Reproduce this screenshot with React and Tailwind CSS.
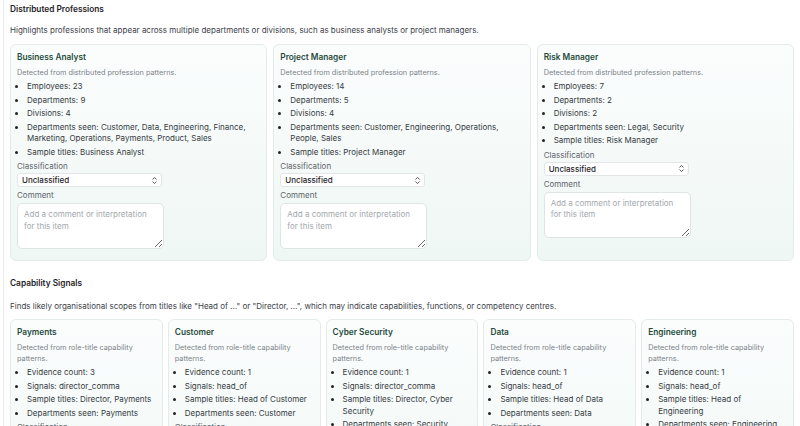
import React from "react";

const profs = [
  {
    title: "Business Analyst",
    items: [
      "Employees: 23",
      "Departments: 9",
      "Divisions: 4",
      "Departments seen: Customer, Data, Engineering, Finance, Marketing, Operations, Payments, Product, Sales",
      "Sample titles: Business Analyst",
    ],
  },
  {
    title: "Project Manager",
    items: [
      "Employees: 14",
      "Departments: 5",
      "Divisions: 4",
      "Departments seen: Customer, Engineering, Operations, People, Sales",
      "Sample titles: Project Manager",
    ],
  },
  {
    title: "Risk Manager",
    items: [
      "Employees: 7",
      "Departments: 2",
      "Divisions: 2",
      "Departments seen: Legal, Security",
      "Sample titles: Risk Manager",
    ],
  },
];

const caps = [
  {
    title: "Payments",
    items: [
      "Evidence count: 3",
      "Signals: director_comma",
      "Sample titles: Director, Payments",
      "Departments seen: Payments",
    ],
  },
  {
    title: "Customer",
    items: [
      "Evidence count: 1",
      "Signals: head_of",
      "Sample titles: Head of Customer",
      "Departments seen: Customer",
    ],
  },
  {
    title: "Cyber Security",
    items: [
      "Evidence count: 1",
      "Signals: director_comma",
      "Sample titles: Director, Cyber Security",
      "Departments seen: Security",
    ],
  },
  {
    title: "Data",
    items: [
      "Evidence count: 1",
      "Signals: head_of",
      "Sample titles: Head of Data",
      "Departments seen: Data",
    ],
  },
  {
    title: "Engineering",
    items: [
      "Evidence count: 1",
      "Signals: head_of",
      "Sample titles: Head of Engineering",
      "Departments seen: Engineering",
    ],
  },
];

function Chevrons() {
  return (
    <svg width="7" height="9" viewBox="0 0 7 9" fill="none" stroke="#555" strokeWidth="1" strokeLinecap="round" strokeLinejoin="round">
      <path d="M1.7 3.2 L3.5 1.4 L5.3 3.2" />
      <path d="M1.7 5.8 L3.5 7.6 L5.3 5.8" />
    </svg>
  );
}

function Card({ title, subtitle, items }) {
  return (
    <div className="rounded-[6px] border border-[#e4ecea] bg-gradient-to-b from-[#fbfdfd] to-[#eff7f4] px-[6px] pt-[6px] pb-[11px]">
      <div className="text-[8.3px] leading-[12px] font-semibold text-[#1f4b3b]">{title}</div>
      <div className="mt-[4px] text-[7.3px] leading-[11px] text-[#7b8389]">{subtitle}</div>
      <ul className="mt-[3px] list-disc pl-[10px] text-[8px] leading-[11.5px] text-[#353b42] marker:text-[#222]">
        {items.map((it, i) => (
          <li key={i} className="mb-[2px]">
            {it}
          </li>
        ))}
      </ul>
      <div className="mt-[2px] text-[8px] leading-[12px] text-[#5d646b]">Classification</div>
      <div className="mt-[1px] flex h-[14px] w-[145px] items-center justify-between rounded-[3px] border border-[#e3e6e8] bg-white pl-[4px] pr-[3px]">
        <span className="text-[8px] leading-[12px] font-medium text-[#1f2328]">Unclassified</span>
        <Chevrons />
      </div>
      <div className="mt-[2px] text-[8px] leading-[12px] text-[#5d646b]">Comment</div>
      <textarea
        className="mt-[2px] block h-[46px] w-[147px] rounded-[5px] border border-[#dfe5e4] bg-white px-[6px] pt-[5px] text-[8px] leading-[11.5px] text-[#333] placeholder:text-[#a3a8ad] outline-none"
        placeholder="Add a comment or interpretation for this item"
      />
    </div>
  );
}

export default function App() {
  return (
    <div
      className="h-[426px] w-[800px] overflow-hidden bg-white"
      style={{ fontFamily: "Inter, 'Noto Sans', sans-serif" }}
    >
      <div className="ml-[3px] h-full border-l border-[#e8eaec] pl-[6px] pr-[6px]">
        <div className="pt-[3px] text-[8.3px] leading-[12px] font-semibold text-[#1f2328]">Distributed Professions</div>
        <div className="mt-[9px] text-[8px] leading-[12px] text-[#3b4148]">
          Highlights professions that appear across multiple departments or divisions, such as business analysts or project managers.
        </div>
        <div className="mt-[8px] grid grid-cols-3 gap-[6px]">
          {profs.map((p) => (
            <Card key={p.title} title={p.title} subtitle="Detected from distributed profession patterns." items={p.items} />
          ))}
        </div>
        <div className="mt-[16px] text-[8.3px] leading-[12px] font-semibold text-[#1f2328]">Capability Signals</div>
        <div className="mt-[11px] text-[8px] leading-[12px] text-[#3b4148]">
          Finds likely organisational scopes from titles like "Head of …" or "Director, …", which may indicate capabilities, functions, or competency centres.
        </div>
        <div className="mt-[7px] grid grid-cols-5 gap-[5px]">
          {caps.map((p) => (
            <Card key={p.title} title={p.title} subtitle="Detected from role-title capability patterns." items={p.items} />
          ))}
        </div>
      </div>
    </div>
  );
}
